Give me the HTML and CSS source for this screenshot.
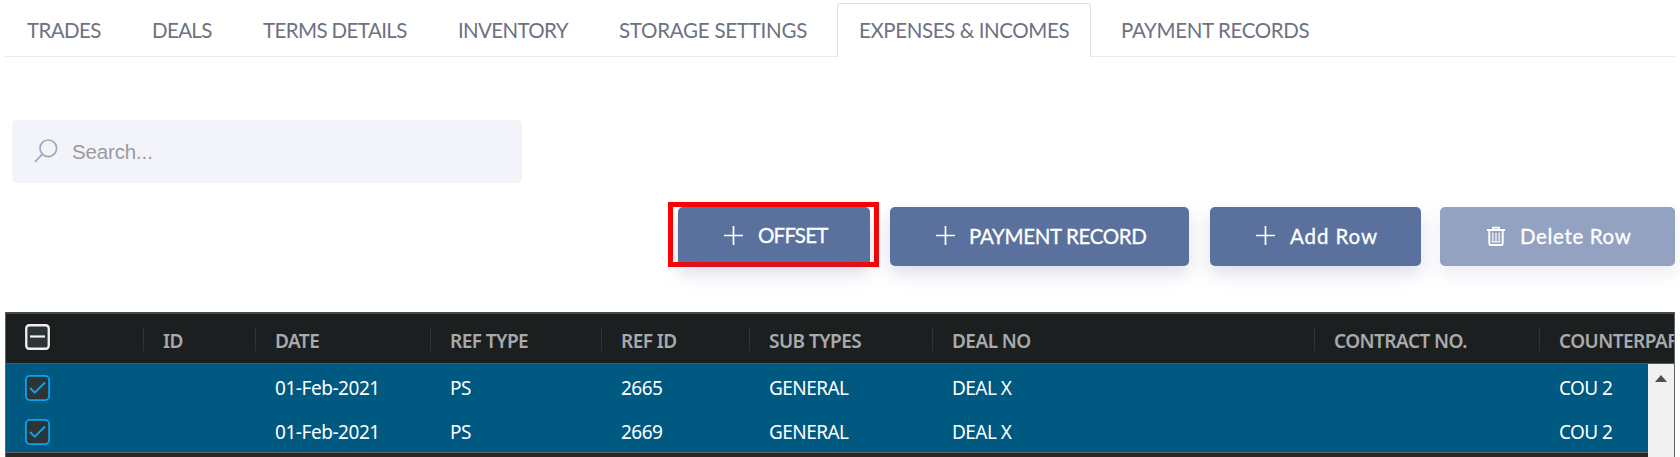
FILE: index.html
```html
<!DOCTYPE html>
<html lang="en">
<head>
<meta charset="utf-8">
<title>Expenses &amp; Incomes</title>
<link rel="stylesheet" href="styles.css">
</head>
<body>
<nav class="tabs">
  <a class="tab trades">TRADES</a>
  <a class="tab deals">DEALS</a>
  <a class="tab terms">TERMS DETAILS</a>
  <a class="tab inventory">INVENTORY</a>
  <a class="tab storage">STORAGE SETTINGS</a>
  <a class="tab expenses active">EXPENSES &amp; INCOMES</a>
  <a class="tab payments">PAYMENT RECORDS</a>
</nav>

<label class="search">
  <svg class="search-icon" width="24" height="24" viewBox="0 0 24 24"><circle cx="14.3" cy="9.3" r="8.3"/><path d="M8.2 15.4L1 22.8"/></svg>
  <span>Search...</span>
</label>

<div class="actions">
  <div class="highlight"><button class="btn offset"><svg class="plus" width="19" height="19" viewBox="0 0 19 19"><path d="M9.5 0v19M0 9.5h19"/></svg><span>OFFSET</span></button></div>
  <button class="btn payment"><svg class="plus" width="19" height="19" viewBox="0 0 19 19"><path d="M9.5 0v19M0 9.5h19"/></svg><span>PAYMENT RECORD</span></button>
  <button class="btn add"><svg class="plus" width="19" height="19" viewBox="0 0 19 19"><path d="M9.5 0v19M0 9.5h19"/></svg><span>Add Row</span></button>
  <button class="btn delete"><svg class="trash" width="18" height="20" viewBox="0 0 18 20"><path d="M0 4h18M6 3.5V1.6h6v1.9M2.3 4.5v13.2q0 1.300 1.300 1.300h10.800q1.300 0 1.300-1.300V4.500"/><path class="thin" d="M5.800 6.800v9.200M9 6.800v9.200M12.200 6.800v9.200M4.500 16h9"/></svg><span>Delete Row</span></button>
</div>

<div class="grid">
  <div class="row head">
    <div class="cell check"><svg width="25" height="26" viewBox="0 0 25 26"><rect class="box-all" x="1.250" y="1.250" width="22.500" height="23.500" rx="3"/><path class="dash" d="M5 12.500h15"/></svg></div>
    <div class="cell">ID</div><div class="cell">DATE</div><div class="cell">REF TYPE</div><div class="cell">REF ID</div><div class="cell">SUB TYPES</div><div class="cell">DEAL NO</div><div class="cell">CONTRACT NO.</div><div class="cell">COUNTERPARTY</div>
  </div>
  <div class="viewport">
    <div class="rows">
      <div class="row">
        <div class="cell check"><svg width="25" height="26" viewBox="0 0 25 26"><rect class="box" x="0.900" y="0.900" width="23.200" height="24.200" rx="4"/><path class="tick" d="M5 13l4.700 4.700L20 7.500"/></svg></div>
        <div class="cell"></div><div class="cell date">01-Feb-2021</div><div class="cell">PS</div><div class="cell">2665</div><div class="cell">GENERAL</div><div class="cell">DEAL X</div><div class="cell"></div><div class="cell">COU 2</div>
      </div>
      <div class="row">
        <div class="cell check"><svg width="25" height="26" viewBox="0 0 25 26"><rect class="box" x="0.900" y="0.900" width="23.200" height="24.200" rx="4"/><path class="tick" d="M5 13l4.700 4.700L20 7.500"/></svg></div>
        <div class="cell"></div><div class="cell date">01-Feb-2021</div><div class="cell">PS</div><div class="cell">2669</div><div class="cell">GENERAL</div><div class="cell">DEAL X</div><div class="cell"></div><div class="cell">COU 2</div>
      </div>
    </div>
    <div class="scrollbar"><svg width="12" height="7" viewBox="0 0 12 7"><path d="M0 7L6 0l6 7z"/></svg></div>
  </div>
</div>
</body>
</html>
```
FILE: styles.css
```css
* { box-sizing: border-box; }

body {
  margin: 0;
  height: 457px;
  overflow: hidden;
  background: #fff;
  font-family: Lato, sans-serif;
}

.tabs {
  display: flex;
  height: 54px;
  margin: 3px 5px 0;
  border-bottom: 1px solid #ebecf3;
}

.tab {
  flex: none;
  height: 54px;
  margin-right: 5px;
  padding: 0 0 0 21px;
  border: 1px solid transparent;
  border-bottom: 0;
  border-radius: 4px 4px 0 0;
  font-size: 20.500px;
  line-height: 53px;
  color: #6c7282;
  white-space: nowrap;
}

.tab.active { border-color: #dee0e8; background: #fff; }
.trades { width: 120px; letter-spacing: -0.600px; }
.deals { width: 106px; letter-spacing: -0.650px; }
.terms { width: 190px; letter-spacing: -0.600px; }
.inventory { width: 156px; letter-spacing: -0.650px; }
.storage { width: 235px; letter-spacing: -0.250px; }
.expenses { width: 254px; letter-spacing: -0.400px; }
.payments { width: 240px; padding-left: 24px; letter-spacing: -0.350px; }

.search {
  display: flex;
  align-items: center;
  gap: 14px;
  width: 510px;
  height: 63px;
  margin: 63px 0 0 12px;
  padding-left: 22px;
  border-radius: 5px;
  background: #f3f4f9;
  font: 20.500px "Liberation Sans", Arial, sans-serif;
  letter-spacing: -0.150px;
  color: #999ba0;
}

.search-icon { margin-bottom: 1px; fill: none; stroke: #a5a3c2; stroke-width: 1.700; }

.actions {
  display: flex;
  align-items: flex-end;
  height: 65px;
  margin: 19px 0 0 668px;
}

.highlight {
  width: 211px;
  height: 65px;
  padding: 0 5px;
  border: 5px solid #f00;
}

.btn {
  display: flex;
  align-items: center;
  flex: none;
  height: 59px;
  margin-bottom: 1px;
  padding: 0 0 2px;
  border: 0;
  border-radius: 5px;
  background: #5a719d;
  box-shadow: 0 8px 18px rgba(80, 95, 150, 0.200);
  font: 20.500px Lato, sans-serif;
  -webkit-text-stroke: 0.300px #fff;
  color: #fff;
  white-space: nowrap;
}

.highlight .btn { height: 55px; padding: 1px 0 0; margin: 0; border-radius: 5px 5px 0 0; box-shadow: 0 12px 18px rgba(80, 95, 150, 0.200); }
.highlight .offset { width: 192px; padding-left: 46px; gap: 15px; letter-spacing: -0.800px; }
.payment { width: 299px; margin-left: 11px; padding-left: 46px; gap: 14px; letter-spacing: -0.350px; }
.add { width: 211px; margin-left: 21px; padding-left: 46px; gap: 15px; letter-spacing: 0.900px; }
.delete { width: 235px; margin-left: 19px; padding-left: 47px; gap: 15px; background: #94a2c1; box-shadow: 0 8px 18px rgba(80, 95, 150, 0.120); letter-spacing: 0.650px; }
.plus, .trash { fill: none; stroke: #fff; stroke-width: 1.700; }
.trash { stroke-width: 1.900; }
.trash .thin { stroke-width: 1.200; }

.grid {
  width: 1670px;
  height: 160px;
  margin: 45px 0 0 5px;
  overflow: hidden;
  border: 1px solid #606366;
  border-top: 2px solid #46494b;
  border-bottom: 0;
  background: #25292b;
  font-family: "Noto Sans", sans-serif;
}

.row {
  display: grid;
  grid-template-columns: 137px 112px 175px 171px 148px 183px 382px 225px 250px;
  height: 44px;
  background: #005980;
  font-size: 19px;
  line-height: 49px;
  letter-spacing: -0.550px;
  color: #fff;
}

.cell { height: 44px; padding-left: 20px; white-space: nowrap; }
.date { letter-spacing: -0.450px; }
.check { display: flex; align-items: center; padding: 3px 0 0 19px; }

.head {
  height: 49px;
  background: #1c1f20;
  font-weight: 600;
  line-height: 54px;
  color: #a9aaab;
}

.head .cell { height: 49px; }
.head .check { padding: 0 0 3px 19px; }
.head .cell + .cell {
  background: linear-gradient(#303436, #303436) 0 13px / 1px 24px no-repeat;
}

.viewport {
  display: flex;
  height: 110px;
  border-top: 1px solid #4b5963;
}

.rows {
  width: 1642px;
  height: 89px;
  overflow: hidden;
  border-bottom: 1px solid #6b6664;
  background: #005980;
}

.scrollbar {
  display: flex;
  flex: 1;
  justify-content: center;
  padding-top: 11px;
  background: #f1f1f1;
}

.scrollbar svg { fill: #505050; }
.box { fill: #2d3436; stroke: #08a5ef; stroke-width: 1.800; }
.box-all { fill: #2d3436; stroke: #f0f0f0; stroke-width: 2.300; }
.tick { fill: none; stroke: #00a8ff; stroke-width: 1.900; }
.dash { stroke: #f5f5f5; stroke-width: 2.200; }
```
